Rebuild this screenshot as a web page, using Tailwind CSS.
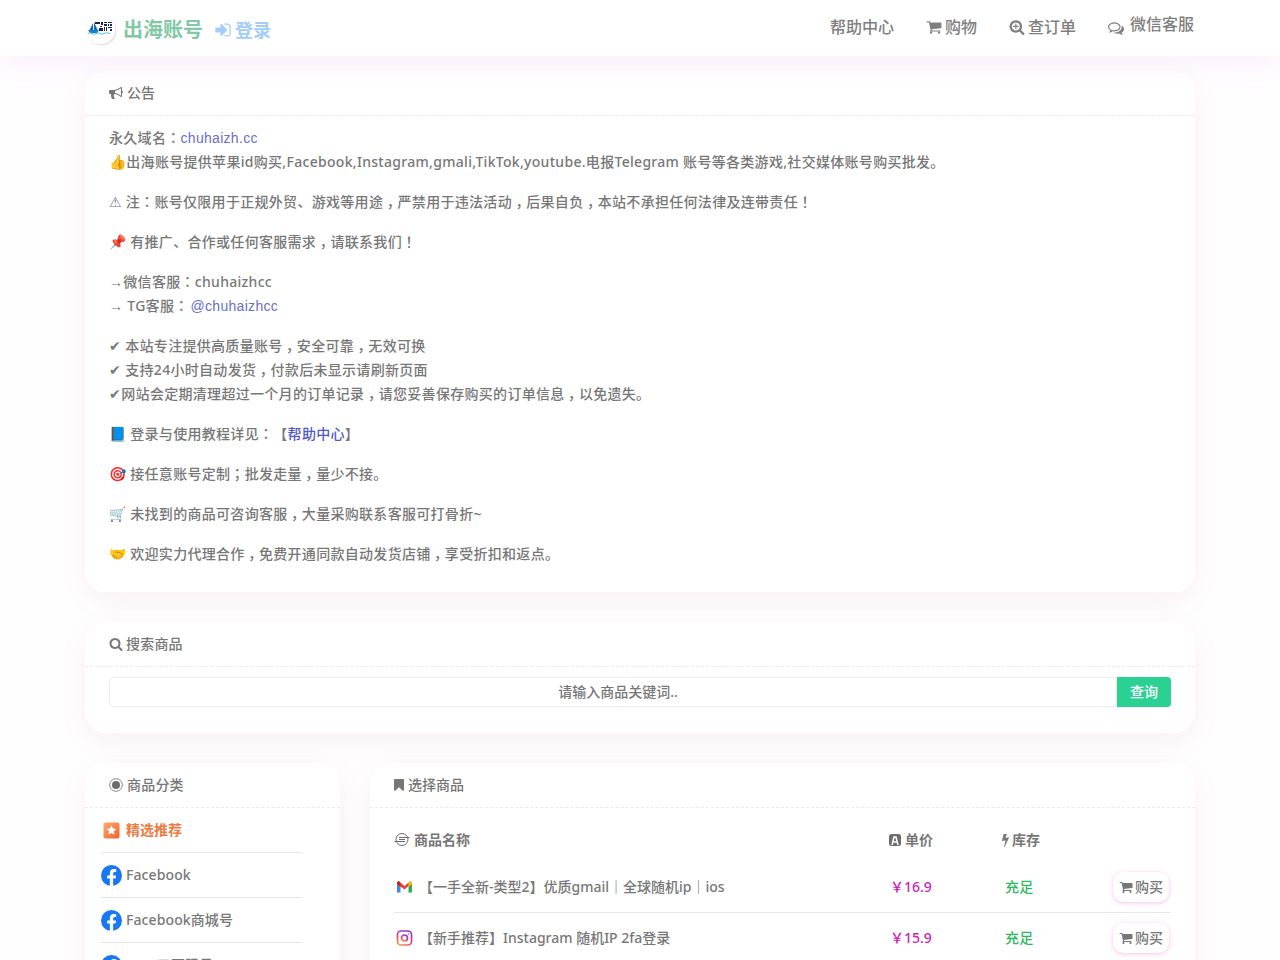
<!DOCTYPE html>
<html lang="zh-CN">
<head>
    <meta charset="UTF-8">
    <meta name="viewport" content="width=device-width, initial-scale=1.0">
    <title>出海账号</title>
    <script src="https://cdn.jsdelivr.net/npm/@tailwindcss/browser@4"></script>
</head>
<body class="h-[960px] overflow-hidden bg-[#fffeff] font-['Noto_Sans','Noto_Sans_CJK_SC',sans-serif] text-sm font-medium text-[#777]">
    <!-- Icon sprite -->
    <svg class="hidden">
        <symbol id="cart" viewBox="0 0 1792 1792"><path d="M704 1536q0 52-38 90t-90 38-90-38-38-90 38-90 90-38 90 38 38 90zm896 0q0 52-38 90t-90 38-90-38-38-90 38-90 90-38 90 38 38 90zm128-1088v512q0 24-16.5 42.5t-40.5 21.5l-1044 122q13 60 13 70 0 16-24 64h920q26 0 45 19t19 45-19 45-45 19h-1024q-26 0-45-19t-19-45q0-11 8-31.5t16-36 21.5-40 15.5-29.5l-177-823h-204q-26 0-45-19t-19-45 19-45 45-19h256q16 0 28.5 6.5t19.5 15.5 13 24.5 8 26 5.5 29.5 4.5 26h1201q26 0 45 19t19 45z"/></symbol>
        <symbol id="search" viewBox="0 0 1792 1792"><path d="M1216 832q0-185-131.5-316.5t-316.5-131.5-316.5 131.5-131.5 316.5 131.5 316.5 316.5 131.5 316.5-131.5 131.5-316.5zm512 832q0 52-38 90t-90 38q-54 0-90-38l-343-342q-179 124-399 124-143 0-273.5-55.5t-225-150-150-225-55.5-273.5 55.5-273.5 150-225 225-150 273.5-55.5 273.5 55.5 225 150 150 225 55.5 273.5q0 220-124 399l343 343q37 37 37 90z"/></symbol>
        <symbol id="search-plus" viewBox="0 0 1792 1792"><path d="M1088 800v64q0 13-9.5 22.5t-22.5 9.5h-224v224q0 13-9.5 22.5t-22.5 9.5h-64q-13 0-22.5-9.5t-9.5-22.5v-224h-224q-13 0-22.5-9.5t-9.5-22.5v-64q0-13 9.5-22.5t22.5-9.5h224v-224q0-13 9.5-22.5t22.5-9.5h64q13 0 22.5 9.5t9.5 22.5v224h224q13 0 22.5 9.5t9.5 22.5z"/><path d="M1216 832q0-185-131.5-316.5t-316.5-131.5-316.5 131.5-131.5 316.5 131.5 316.5 316.5 131.5 316.5-131.5 131.5-316.5zm512 832q0 52-38 90t-90 38q-54 0-90-38l-343-342q-179 124-399 124-143 0-273.5-55.5t-225-150-150-225-55.5-273.5 55.5-273.5 150-225 225-150 273.5-55.5 273.5 55.5 225 150 150 225 55.5 273.5q0 220-124 399l343 343q37 37 37 90z"/></symbol>
        <symbol id="bookmark" viewBox="256 0 1280 1792"><path d="M1420 128q23 0 44 9 33 13 52.5 41t19.5 62v1289q0 34-19.5 62t-52.5 41q-19 8-44 8-48 0-83-32l-441-424-441 424q-36 33-83 33-23 0-44-9-33-13-52.5-41t-19.5-62v-1289q0-34 19.5-62t52.5-41q21-9 44-9h1048z"/></symbol>
        <symbol id="sign-in" viewBox="0 0 1792 1792"><path d="M1312 896q0 26-19 45l-544 544q-19 19-45 19t-45-19-19-45v-288h-448q-26 0-45-19t-19-45v-384q0-26 19-45t45-19h448v-288q0-26 19-45t45-19 45 19l544 544q19 19 19 45zm352-352v704q0 119-84.5 203.5t-203.5 84.5h-320q-13 0-22.5-9.5t-9.5-22.5q0-4-1-20t-.5-26.5 3-23.5 10-19.5 20.5-6.5h320q66 0 113-47t47-113v-704q0-66-47-113t-113-47h-312l-11.5-1-11.5-3-8-5.5-7-9-2-13.5q0-4-1-20t-.5-26.5 3-23.5 10-19.5 20.5-6.5h320q119 0 203.5 84.5t84.5 203.5z"/></symbol>
        <symbol id="bolt" viewBox="448 0 896 1792"><path d="M1333 566q18 20 7 44l-540 1157q-13 25-42 25-4 0-14-2-17-5-25.5-19t-4.5-30l197-808-406 101q-4 1-12 1-18 0-31-11-18-15-13-39l201-825q4-14 16-23t28-9h328q19 0 32 12.5t13 29.5q0 8-5 18l-171 463 396-98q8-2 12-2 19 0 34 15z"/></symbol>
        <symbol id="comments" viewBox="0 0 1792 1792"><path d="M704 384q-153 0-286 52t-211.5 141-78.5 191q0 82 53 158t149 132l97 56-35 84q34-20 62-39l44-31 53 10q78 14 153 14 153 0 286-52t211.5-141 78.5-191-78.5-191-211.5-141-286-52zm0-128q191 0 353.5 68.5t256.5 186.5 94 257-94 257-256.5 186.5-353.5 68.5q-86 0-176-16-124 88-278 128-36 9-86 16h-3q-11 0-20.5-8t-11.5-21q-1-3-1-6.5t.5-6.5 2-6l2.5-5 3.5-5.5 4-5 4.5-5 4-4.5q5-6 23-25t26-29.5 22.5-29 25-38.5 20.5-44q-124-72-195-177t-71-224q0-139 94-257t256.5-186.5 353.5-68.5zm822 1169q10 24 20.5 44t25 38.5 22.5 29 26 29.5 23 25q1 1 4 4.5t4.5 5 4 5 3.500 5.500l2.500 5 2 6 .5 6.500-1 6.500q-3 14-13 22t-22 7q-50-7-86-16-154-40-278-128-90 16-176 16-271 0-472-132 58 4 88 4 161 0 309-45t264-129q125-92 192-212t67-254q0-77-23-152 129 71 204 178t75 230q0 120-71 224.500t-195 176.500z"/></symbol>
        <symbol id="bullhorn" viewBox="0 0 1792 1792"><path d="M1664 640q53 0 90.5 37.5t37.5 90.5-37.5 90.5-90.5 37.5v384q0 52-38 90t-90 38q-417-347-812-380-58 19-91 66t-31 100.5 40 92.5q-20 33-23 65.5t6 58 33.5 55 48 50 61.5 50.5q-29 58-111.5 83t-168.5 11.5-132-55.5q-7-23-29.5-87.5t-32-94.5-23-89-15-101 3.5-98.5 22-110.5h-122q-66 0-113-47t-47-113v-192q0-66 47-113t113-47h480q435 0 896-384 52 0 90 38t38 90v384zm-128 604v-954q-394 302-768 343v270q377 42 768 341z"/></symbol>
        <symbol id="facebook" viewBox="0 0 24 24"><circle cx="12" cy="12" r="12" fill="#1877f2"/><path fill="#fff" d="M16.67 15.47 17.2 12h-3.33V9.75c0-.95.46-1.87 1.96-1.87h1.51V4.92s-1.37-.23-2.68-.23c-2.74 0-4.53 1.66-4.53 4.67V12H7.08v3.47h3.05V24h3.74v-8.53z"/></symbol>
    </svg>

    <header class="relative z-10 h-14 bg-white shadow-[0_8px_30px_rgba(200,60,220,0.08)]">
        <div class="mx-auto flex h-14 w-[1110px] justify-between">
            <div class="flex items-center pt-1">
                <svg class="ml-0.5 mr-0.5 size-7 rounded-full shadow-[1px_1px_2px_rgba(120,60,90,0.22)]" viewBox="0 0 28 28">
                    <circle cx="14" cy="14" r="14" fill="#fff"/>
                    <path fill="#1467b5" d="M6 7v8H2zM7 6l4 9H7z"/>
                    <path fill="#1780cf" d="M1 14h11l-2 3H3z"/>
                    <path fill="#16264f" d="M8 6h5v2H8zM14 6h2v3h-2zM13 10h2v1h-2zM12 12h4v3h-4zM17 6h3v1h-3zM17 8h3v2h-3zM17 11h1v4h-1zM19 11h1v4h-1zM21 6h4v1h-4zM21 8h1v2h-1zM23 8h2v2h-2zM21 11h4v1h-4zM23 13h2v2h-2z"/>
                    <path fill="none" stroke="#55bde8" d="M1 17.500q2-1.500 4 0t4 0 4 0 4 0 6 0"/>
                </svg>
                <span class="ml-1.5 text-xl font-bold text-[#82c8a5]">出海账号</span>
                <a class="ml-[11px] flex items-center text-lg font-bold text-[#a3cdf8]"><svg class="mr-[3px] size-[18px] fill-current"><use href="#sign-in"/></svg>登录</a>
            </div>
            <nav class="flex gap-8 pt-[15px] text-base leading-6 text-[#7f7f7f]">
                <a>帮助中心</a>
                <a class="flex"><svg class="mt-1 mr-[3px] size-4 fill-current"><use href="#cart"/></svg>购物</a>
                <a class="flex"><svg class="mt-1 mr-[3px] size-4 fill-current"><use href="#search-plus"/></svg>查订单</a>
                <a class="-mt-[3px] mr-px flex"><svg class="mt-2 mr-1.5 size-4 fill-current"><use href="#comments"/></svg>微信客服</a>
            </nav>
        </div>
    </header>

    <main class="mx-auto flex w-[1110px] flex-col gap-[30px] pt-[15px]">
        <section class="h-[521px] rounded-[20px] bg-white shadow-[0_8px_30px_rgba(140,10,50,0.06)]">
            <h2 class="flex h-[45px] items-center border-b border-dashed border-[#ebebeb] pl-6"><svg class="mr-1 size-3.5 fill-current"><use href="#bullhorn"/></svg>公告</h2>
            <div id="notice" class="flex flex-col gap-4 px-6 pt-2.5 leading-6 tracking-[0.3px] [text-spacing-trim:space-all]">
                <div>
                    <p class="h-6">永久域名：<a class="font-['Liberation_Sans'] font-normal leading-none text-[#6a6fc8]">chuhaizh.cc</a></p>
                    <p class="h-6">👍出海账号提供苹果id购买,Facebook,Instagram,gmali,TikTok,youtube.电报Telegram 账号等各类游戏,社交媒体账号购买批发。</p>
                </div>
                <p class="h-6"><span class="font-['DejaVu_Sans'] font-normal leading-none">⚠</span> 注：账号仅限用于正规外贸、游戏等用途，严禁用于违法活动，后果自负，本站不承担任何法律及连带责任！</p>
                <p class="h-6">📌 有推广、合作或任何客服需求，请联系我们！</p>
                <div>
                    <p class="h-6"><span class="font-['Liberation_Sans'] font-normal leading-none">→</span>微信客服：chuhaizhcc</p>
                    <p class="h-6"><span class="font-['Liberation_Sans'] font-normal leading-none">→</span> TG客服：<a class="ml-0.5 font-['Liberation_Sans'] font-normal leading-none text-[#6a6fc8]">@chuhaizhcc</a></p>
                </div>
                <div>
                    <p class="h-6">✔ 本站专注提供高质量账号，安全可靠，无效可换</p>
                    <p class="h-6">✔ 支持24小时自动发货，付款后未显示请刷新页面</p>
                    <p class="h-6">✔网站会定期清理超过一个月的订单记录，请您妥善保存购买的订单信息，以免遗失。</p>
                </div>
                <p class="h-6">📘 登录与使用教程详见：【<a class="text-[#5058c8]">帮助中心</a>】</p>
                <p class="h-6">🎯 接任意账号定制；批发走量，量少不接。</p>
                <p class="h-6">🛒 未找到的商品可咨询客服，大量采购联系客服可打骨折~</p>
                <p class="h-6">🤝 欢迎实力代理合作，免费开通同款自动发货店铺，享受折扣和返点。</p>
            </div>
        </section>

        <section class="h-[111px] rounded-[20px] bg-white shadow-[0_8px_30px_rgba(140,10,50,0.06)]">
            <h2 class="flex h-[45px] items-center border-b border-dashed border-[#ebebeb] pl-6 tracking-[0.2px]"><svg class="mr-[3px] size-3.5 fill-current"><use href="#search"/></svg>搜索商品</h2>
            <div class="flex px-6 pt-2.5">
                <div class="flex h-[30px] w-[1008px] items-center justify-center rounded-l border border-[#ececec] pl-2.5">请输入商品关键词..</div>
                <button class="h-[30px] w-[54px] rounded-r bg-[#2bd093] text-white">查询</button>
            </div>
        </section>

        <div class="flex gap-[30px]">
            <aside class="h-[400px] w-[255px] rounded-[20px] bg-white shadow-[0_8px_30px_rgba(140,10,50,0.06)]">
                <h2 class="flex h-[45px] items-center border-b border-dashed border-[#ebebeb] pl-6 tracking-[0.2px]">
                    <svg class="mr-1 size-3.5" viewBox="0 0 14 14"><circle cx="7" cy="7" r="6.300" fill="none" stroke="#888"/><circle cx="7" cy="7" r="4" fill="#6c6c6c"/></svg>商品分类
                </h2>
                <ul class="ml-4 w-[201px]">
                    <li class="flex h-[45px] items-center border-b border-[#e7e7e7] font-bold text-[#ec7b42]">
                        <svg class="mr-1 size-[21px]" viewBox="0 0 21 21"><defs><linearGradient id="star-bg" x2="1" y2="1"><stop stop-color="#ffac70"/><stop offset="1" stop-color="#f0612c"/></linearGradient></defs><rect x="2.500" y="2.500" width="16" height="16" rx="2" fill="url(#star-bg)"/><path fill="#fff" d="m10.500 5.500 1.500 3 3.300.5-2.400 2.300.6 3.300-3-1.600-3 1.600.6-3.300L5.700 9 9 8.500z"/></svg>精选推荐
                    </li>
                    <li class="flex h-[45px] items-center border-b border-[#e7e7e7] tracking-[0.1px]"><svg class="mr-1 size-[21px]"><use href="#facebook"/></svg>Facebook</li>
                    <li class="flex h-[45px] items-center border-b border-[#e7e7e7] tracking-[0.1px]"><svg class="mr-1 size-[21px]"><use href="#facebook"/></svg>Facebook商城号</li>
                    <li class="flex h-[45px] items-center border-b border-[#e7e7e7] tracking-[0.1px]"><svg class="mr-1 size-[21px]"><use href="#facebook"/></svg>FB、三不限号</li>
                </ul>
            </aside>

            <section class="h-[400px] w-[825px] rounded-[20px] bg-white shadow-[0_8px_30px_rgba(140,10,50,0.06)]">
                <h2 class="flex h-[45px] items-center border-b border-dashed border-[#ebebeb] pl-6"><svg class="mr-1 h-3.5 w-2.5 fill-current"><use href="#bookmark"/></svg>选择商品</h2>
                <div class="mx-6 pt-2.5">
                    <div class="flex h-[44px] items-center font-bold">
                        <div class="flex w-[495px] items-center"><svg class="mr-1 size-4" viewBox="0 0 16 16" fill="none" stroke="#6c6c6c"><circle cx="8" cy="7.500" r="6"/><path d="M5 5.500h10.500M5 7.500h6M.500 9.500H11"/></svg>商品名称</div>
                        <div class="flex w-[113px] items-center"><svg class="mr-1 size-3" viewBox="0 0 12 12"><rect width="12" height="12" rx="2.500" fill="#6c6c6c"/><path fill="none" stroke="#fff" stroke-width="1.500" d="M3 11 5 3h2l2 8M4.500 8h3"/></svg>单价</div>
                        <div class="flex items-center"><svg class="mr-[3px] h-3.5 w-[7px] fill-current"><use href="#bolt"/></svg>库存</div>
                    </div>
                    <div class="flex h-[51px] items-center border-b border-[#e7e7e7]">
                        <svg class="ml-0.5 mr-1.5 h-4 w-[17px]" viewBox="0 0 17 16"><path fill="#4285f4" d="M1 4v9.500h3.500V7z"/><path fill="#34a853" d="M16 4v9.500h-3.500V7z"/><path fill="#ea4335" d="M1 3.500 2.500 2 8.500 7l6-5L16 4l-7.500 6.500L1 5z"/><path fill="#fbbc04" d="M12.500 3.800 14.500 2 16 3.500V5l-3.500 3z"/><path fill="#c5221f" d="M1 3.500 2.500 2l2 1.800V8L1 5z"/></svg>
                        <span class="w-[471px]">【一手全新-类型2】优质gmail｜全球随机ip｜ios</span>
                        <span class="w-[115px] font-medium text-[#cc21bd]">￥16.9</span>
                        <span class="w-[108px] tracking-[0.3px] text-[#31b95e]">充足</span>
                        <button class="flex h-[30px] w-14 items-center justify-center rounded-[10px] shadow-[0_1px_4px_rgba(230,50,190,0.3)]"><svg class="mr-0.5 size-3.5 fill-current"><use href="#cart"/></svg>购买</button>
                    </div>
                    <div class="flex h-[51px] items-center border-b border-[#e7e7e7]">
                        <svg class="ml-0.5 mr-1.5 h-4 w-[17px]" viewBox="0 0 17 16" fill="none" stroke="url(#insta)" stroke-width="1.700"><defs><linearGradient id="insta" x1="0" y1="1" x2=".5" y2="0"><stop stop-color="#f8a04a"/><stop offset=".45" stop-color="#e34a72"/><stop offset="1" stop-color="#9a38c0"/></linearGradient></defs><rect x="1.500" y="1" width="14" height="14" rx="3.500"/><circle cx="8.500" cy="8" r="3"/><circle cx="12.300" cy="4.200" r=".5" stroke-width=".8"/></svg>
                        <span class="w-[471px]">【新手推荐】Instagram 随机IP 2fa登录</span>
                        <span class="w-[115px] font-medium text-[#cc21bd]">￥15.9</span>
                        <span class="w-[108px] tracking-[0.3px] text-[#31b95e]">充足</span>
                        <button class="flex h-[30px] w-14 items-center justify-center rounded-[10px] shadow-[0_1px_4px_rgba(230,50,190,0.3)]"><svg class="mr-0.5 size-3.5 fill-current"><use href="#cart"/></svg>购买</button>
                    </div>
                </div>
            </section>
        </div>
    </main>

    <script>
        // Centre the full-width punctuation of the notice in its cell
        document.querySelectorAll('#notice p').forEach(p => {
            p.innerHTML = p.innerHTML
                .replace(/[：；！]/g, `<span lang="zh-TW" class="font-['Noto_Sans_CJK_TC'] leading-none">$&</span>`)
                .replace(/，/g, `<span class="inline-block w-[14.3px] text-center leading-none [font-feature-settings:'halt']">，</span>`);
        });
    </script>
</body>
</html>
